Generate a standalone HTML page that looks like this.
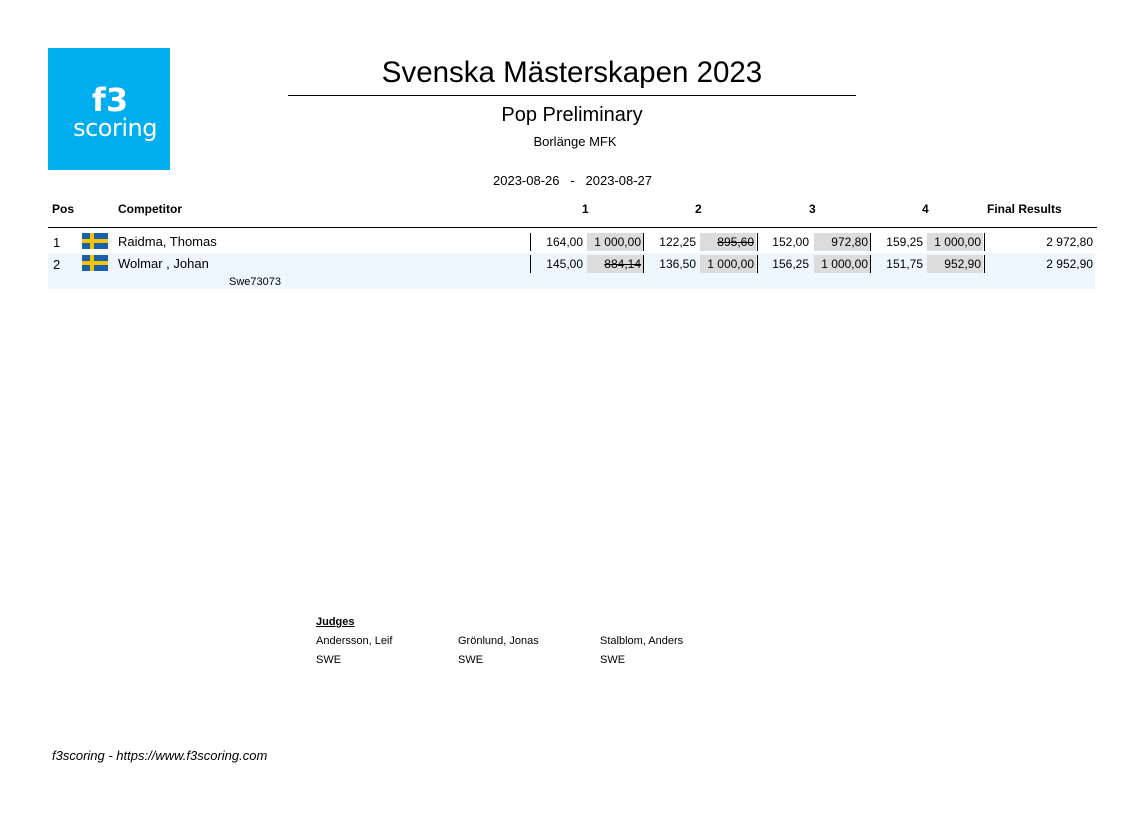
<!DOCTYPE html><html><head><meta charset="utf-8"><style>
body{margin:0;width:1142px;height:813px;background:#fff;font-family:"Liberation Sans",Arial,sans-serif;color:#000;position:relative;overflow:hidden}
.a{position:absolute;white-space:nowrap}
.r{text-align:right}
.g{position:absolute;background:#dcdcdc;height:18px}
.vl{position:absolute;width:1px;height:18px;background:#000}
.flag{position:absolute;width:26px;height:16px;background:#1a5fa8}
.flag:before{content:"";position:absolute;left:8px;top:0;width:4px;height:16px;background:#f5c400}
.flag:after{content:"";position:absolute;left:0;top:6px;width:26px;height:4px;background:#f5c400}
.s{text-decoration:line-through}
</style></head><body>
<div class="a" style="left:48px;top:48px;width:122px;height:122px;background:#00aeef"></div>
<div class="a" style="left:48px;top:84px;width:124px;text-align:center;color:#fff;font-weight:bold;font-size:32px;line-height:32px;font-family:'DejaVu Sans',sans-serif">f3</div>
<div class="a" style="left:48px;top:113px;width:134px;text-align:center;color:#fff;font-size:24px;line-height:30px;font-family:'DejaVu Sans',sans-serif;letter-spacing:-0.5px">scoring</div>
<div class="a" style="left:288px;top:56px;width:568px;text-align:center;font-size:29.5px">Svenska Mästerskapen 2023</div>
<div class="a" style="left:288px;top:95px;width:568px;height:1px;background:#000"></div>
<div class="a" style="left:288px;top:104px;width:568px;text-align:center;font-size:20px">Pop Preliminary</div>
<div class="a" style="left:288px;top:134px;width:574px;text-align:center;font-size:13px">Borlänge MFK</div>
<div class="a" style="left:493px;top:173px;font-size:13px">2023-08-26&nbsp;&nbsp;&nbsp;-&nbsp;&nbsp;&nbsp;2023-08-27</div>
<div class="a" style="left:52px;top:202px;font-size:12px;font-weight:bold">Pos</div>
<div class="a" style="left:118px;top:202px;font-size:12px;font-weight:bold">Competitor</div>
<div class="a" style="left:582px;top:202px;font-size:12px;font-weight:bold">1</div>
<div class="a" style="left:695px;top:202px;font-size:12px;font-weight:bold">2</div>
<div class="a" style="left:809px;top:202px;font-size:12px;font-weight:bold">3</div>
<div class="a" style="left:922px;top:202px;font-size:12px;font-weight:bold">4</div>
<div class="a" style="left:987px;top:202px;font-size:12px;font-weight:bold">Final Results</div>
<div class="a" style="left:48px;top:227px;width:1049px;height:1px;background:#000"></div>
<div class="a" style="left:48px;top:253px;width:1047px;height:36px;background:#eef6fe"></div>
<div class="a" style="left:53px;top:235px;font-size:13px">1</div>
<div class="a" style="left:53px;top:257px;font-size:13px">2</div>
<div class="flag" style="left:82px;top:233px"></div>
<div class="flag" style="left:82px;top:255px"></div>
<div class="a" style="left:118px;top:234px;font-size:13px">Raidma, Thomas</div>
<div class="a" style="left:118px;top:256px;font-size:13px">Wolmar , Johan</div>
<div class="a" style="left:229px;top:276px;font-size:11px">Swe73073</div>
<div style="position:absolute;left:0;top:233px;font-size:12px">
<div class="vl" style="left:530px"></div><div class="a r" style="left:530px;width:53px;top:2px">164,00</div><div class="g" style="left:587px;width:56px"></div><div class="a r" style="left:587px;width:54px;top:2px">1 000,00</div><div class="vl" style="left:643px"></div>
<div class="a r" style="left:643px;width:53px;top:2px">122,25</div><div class="g" style="left:700px;width:56px"></div><div class="a r s" style="left:700px;width:54px;top:2px">895,60</div><div class="vl" style="left:757px"></div>
<div class="a r" style="left:757px;width:52px;top:2px">152,00</div><div class="g" style="left:814px;width:56px"></div><div class="a r" style="left:814px;width:54px;top:2px">972,80</div><div class="vl" style="left:870px"></div>
<div class="a r" style="left:870px;width:53px;top:2px">159,25</div><div class="g" style="left:927px;width:56px"></div><div class="a r" style="left:927px;width:54px;top:2px">1 000,00</div><div class="vl" style="left:984px"></div>
<div class="a r" style="left:990px;width:103px;top:2px">2 972,80</div>
</div>
<div style="position:absolute;left:0;top:255px;font-size:12px">
<div class="vl" style="left:530px"></div><div class="a r" style="left:530px;width:53px;top:2px">145,00</div><div class="g" style="left:587px;width:56px"></div><div class="a r s" style="left:587px;width:54px;top:2px">884,14</div><div class="vl" style="left:643px"></div>
<div class="a r" style="left:643px;width:53px;top:2px">136,50</div><div class="g" style="left:700px;width:56px"></div><div class="a r" style="left:700px;width:54px;top:2px">1 000,00</div><div class="vl" style="left:757px"></div>
<div class="a r" style="left:757px;width:52px;top:2px">156,25</div><div class="g" style="left:814px;width:56px"></div><div class="a r" style="left:814px;width:54px;top:2px">1 000,00</div><div class="vl" style="left:870px"></div>
<div class="a r" style="left:870px;width:53px;top:2px">151,75</div><div class="g" style="left:927px;width:56px"></div><div class="a r" style="left:927px;width:54px;top:2px">952,90</div><div class="vl" style="left:984px"></div>
<div class="a r" style="left:990px;width:103px;top:2px">2 952,90</div>
</div>
<div class="a" style="left:316px;top:616px;font-size:11px;font-weight:bold;text-decoration:underline">Judges</div>
<div class="a" style="left:316px;top:635px;font-size:11px">Andersson, Leif</div>
<div class="a" style="left:458px;top:635px;font-size:11px">Grönlund, Jonas</div>
<div class="a" style="left:600px;top:635px;font-size:11px">Stalblom, Anders</div>
<div class="a" style="left:316px;top:654px;font-size:11px">SWE</div>
<div class="a" style="left:458px;top:654px;font-size:11px">SWE</div>
<div class="a" style="left:600px;top:654px;font-size:11px">SWE</div>
<div class="a" style="left:52px;top:748px;font-size:13px;font-style:italic">f3scoring - https://www.f3scoring.com</div>
</body></html>
